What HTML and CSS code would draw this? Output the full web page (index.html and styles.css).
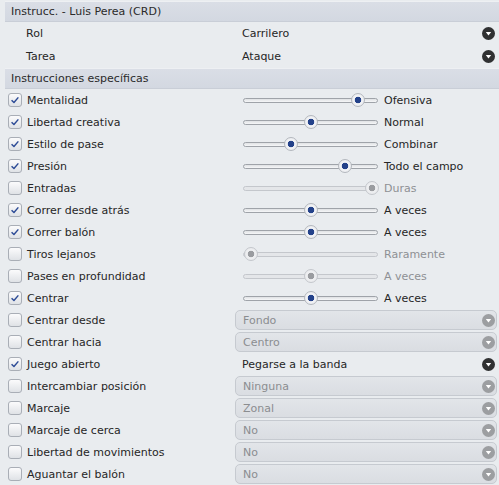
FILE: index.html
```html
<!DOCTYPE html>
<html>
<head>
<meta charset="utf-8">
<link rel="stylesheet" href="styles.css">
</head>
<body>
<div class="panel">
  <div class="head first">Instrucc. - Luis Perea (CRD)</div>
  <div class="row basic r1">
    <span class="lbl">Rol</span>
    <div class="ctl sel plain"><span class="val">Carrilero</span><svg class="arrow" viewBox="0 0 13 13"><circle cx="6.5" cy="6.5" r="6.5"/><path d="M3.8 5 H9.2 L6.5 8.6 Z"/></svg></div>
  </div>
  <div class="row basic r2">
    <span class="lbl">Tarea</span>
    <div class="ctl sel plain"><span class="val">Ataque</span><svg class="arrow" viewBox="0 0 13 13"><circle cx="6.5" cy="6.5" r="6.5"/><path d="M3.8 5 H9.2 L6.5 8.6 Z"/></svg></div>
  </div>
  <div class="head">Instrucciones específicas</div>

  <div class="row">
    <span class="chk on"><svg viewBox="0 0 14 14"><path d="M3 7.2 L5.8 10 L10.9 3.9"/></svg></span><span class="lbl">Mentalidad</span>
    <div class="ctl slider"><div class="track"><span class="thumb" style="left:107px"></span></div><span class="sv">Ofensiva</span></div>
  </div>
  <div class="row">
    <span class="chk on"><svg viewBox="0 0 14 14"><path d="M3 7.2 L5.8 10 L10.9 3.9"/></svg></span><span class="lbl">Libertad creativa</span>
    <div class="ctl slider"><div class="track"><span class="thumb" style="left:60px"></span></div><span class="sv">Normal</span></div>
  </div>
  <div class="row">
    <span class="chk on"><svg viewBox="0 0 14 14"><path d="M3 7.2 L5.8 10 L10.9 3.9"/></svg></span><span class="lbl">Estilo de pase</span>
    <div class="ctl slider"><div class="track"><span class="thumb" style="left:40px"></span></div><span class="sv">Combinar</span></div>
  </div>
  <div class="row">
    <span class="chk on"><svg viewBox="0 0 14 14"><path d="M3 7.2 L5.8 10 L10.9 3.9"/></svg></span><span class="lbl">Presión</span>
    <div class="ctl slider"><div class="track"><span class="thumb" style="left:94px"></span></div><span class="sv">Todo el campo</span></div>
  </div>
  <div class="row">
    <span class="chk"></span><span class="lbl">Entradas</span>
    <div class="ctl slider off"><div class="track"><span class="thumb" style="left:121px"></span></div><span class="sv">Duras</span></div>
  </div>
  <div class="row">
    <span class="chk on"><svg viewBox="0 0 14 14"><path d="M3 7.2 L5.8 10 L10.9 3.9"/></svg></span><span class="lbl">Correr desde atrás</span>
    <div class="ctl slider"><div class="track"><span class="thumb" style="left:60px"></span></div><span class="sv">A veces</span></div>
  </div>
  <div class="row">
    <span class="chk on"><svg viewBox="0 0 14 14"><path d="M3 7.2 L5.8 10 L10.9 3.9"/></svg></span><span class="lbl">Correr balón</span>
    <div class="ctl slider"><div class="track"><span class="thumb" style="left:60px"></span></div><span class="sv">A veces</span></div>
  </div>
  <div class="row">
    <span class="chk"></span><span class="lbl">Tiros lejanos</span>
    <div class="ctl slider off"><div class="track"><span class="thumb" style="left:0px"></span></div><span class="sv">Raramente</span></div>
  </div>
  <div class="row">
    <span class="chk"></span><span class="lbl">Pases en profundidad</span>
    <div class="ctl slider off"><div class="track"><span class="thumb" style="left:60px"></span></div><span class="sv">A veces</span></div>
  </div>
  <div class="row">
    <span class="chk on"><svg viewBox="0 0 14 14"><path d="M3 7.2 L5.8 10 L10.9 3.9"/></svg></span><span class="lbl">Centrar</span>
    <div class="ctl slider"><div class="track"><span class="thumb" style="left:60px"></span></div><span class="sv">A veces</span></div>
  </div>
  <div class="row">
    <span class="chk"></span><span class="lbl">Centrar desde</span>
    <div class="ctl sel box"><span class="val">Fondo</span><svg class="arrow" viewBox="0 0 13 13"><circle cx="6.5" cy="6.5" r="6.5"/><path d="M3.8 5 H9.2 L6.5 8.6 Z"/></svg></div>
  </div>
  <div class="row">
    <span class="chk"></span><span class="lbl">Centrar hacia</span>
    <div class="ctl sel box"><span class="val">Centro</span><svg class="arrow" viewBox="0 0 13 13"><circle cx="6.5" cy="6.5" r="6.5"/><path d="M3.8 5 H9.2 L6.5 8.6 Z"/></svg></div>
  </div>
  <div class="row">
    <span class="chk on"><svg viewBox="0 0 14 14"><path d="M3 7.2 L5.8 10 L10.9 3.9"/></svg></span><span class="lbl">Juego abierto</span>
    <div class="ctl sel plain"><span class="val">Pegarse a la banda</span><svg class="arrow" viewBox="0 0 13 13"><circle cx="6.5" cy="6.5" r="6.5"/><path d="M3.8 5 H9.2 L6.5 8.6 Z"/></svg></div>
  </div>
  <div class="row">
    <span class="chk"></span><span class="lbl">Intercambiar posición</span>
    <div class="ctl sel box"><span class="val">Ninguna</span><svg class="arrow" viewBox="0 0 13 13"><circle cx="6.5" cy="6.5" r="6.5"/><path d="M3.8 5 H9.2 L6.5 8.6 Z"/></svg></div>
  </div>
  <div class="row">
    <span class="chk"></span><span class="lbl">Marcaje</span>
    <div class="ctl sel box"><span class="val">Zonal</span><svg class="arrow" viewBox="0 0 13 13"><circle cx="6.5" cy="6.5" r="6.5"/><path d="M3.8 5 H9.2 L6.5 8.6 Z"/></svg></div>
  </div>
  <div class="row">
    <span class="chk"></span><span class="lbl">Marcaje de cerca</span>
    <div class="ctl sel box"><span class="val">No</span><svg class="arrow" viewBox="0 0 13 13"><circle cx="6.5" cy="6.5" r="6.5"/><path d="M3.8 5 H9.2 L6.5 8.6 Z"/></svg></div>
  </div>
  <div class="row">
    <span class="chk"></span><span class="lbl">Libertad de movimientos</span>
    <div class="ctl sel box"><span class="val">No</span><svg class="arrow" viewBox="0 0 13 13"><circle cx="6.5" cy="6.5" r="6.5"/><path d="M3.8 5 H9.2 L6.5 8.6 Z"/></svg></div>
  </div>
  <div class="row">
    <span class="chk"></span><span class="lbl">Aguantar el balón</span>
    <div class="ctl sel box"><span class="val">No</span><svg class="arrow" viewBox="0 0 13 13"><circle cx="6.5" cy="6.5" r="6.5"/><path d="M3.8 5 H9.2 L6.5 8.6 Z"/></svg></div>
  </div>
</div>
</body>
</html>
```

FILE: styles.css
```css
html, body {
  margin: 0;
  padding: 0;
  background: #e9ecef;
  font-family: "DejaVu Sans", Verdana, sans-serif;
  font-size: 11px;
  color: #262626;
  overflow: hidden;
}

.panel {
  padding-left: 5px;
  width: 494px;
}

.head {
  height: 21px;
  box-sizing: border-box;
  padding-left: 6px;
  display: flex;
  align-items: center;
  background: linear-gradient(#dadee6, #d3d8e1);
  border-top: 1px solid #eef0f3;
  border-bottom: 1px solid #c9ced7;
  color: #2a2a2a;
}

.head.first {
  margin-top: 1px;
}

.row {
  height: 22px;
  display: grid;
  grid-template-columns: 230px 1fr;
  align-items: center;
  position: relative;
}

.row.r1 { height: 23px; }
.row.r2 { height: 23px; }

.row:not(.basic) {
  grid-template-columns: 22px 208px 1fr;
}

.basic .lbl {
  padding-left: 21px;
}

.chk {
  width: 14px;
  height: 14px;
  box-sizing: border-box;
  margin-left: 3px;
  border: 1px solid #a9aeb6;
  border-radius: 3px;
  background: linear-gradient(#fbfbfc, #dfe2e6);
  display: flex;
}

.chk svg {
  width: 12px;
  height: 12px;
}

.chk svg path {
  fill: none;
  stroke: #2c4b96;
  stroke-width: 1.7;
  stroke-linejoin: round;
}

.lbl {
  white-space: nowrap;
}

.ctl {
  display: flex;
  align-items: center;
  margin-right: 2px;
}

.sel {
  justify-content: space-between;
  padding-left: 7px;
}

.sel .arrow {
  width: 13px;
  height: 13px;
  margin-right: 2px;
}

.sel.plain .arrow circle { fill: #303132; }
.sel .arrow path { fill: #ffffff; }

.sel.box {
  height: 20px;
  box-sizing: border-box;
  padding-left: 7px;
  border: 1px solid #c6cad0;
  border-radius: 5px;
  background: linear-gradient(#e2e5e9, #dadde2);
  color: #8b8d90;
}

.sel.box .arrow { margin-right: 1px; }
.sel.box .arrow circle { fill: #9c9ea1; }

.slider {
  padding-left: 8px;
}

.track {
  position: relative;
  width: 135px;
  height: 5px;
  box-sizing: border-box;
  border: 1px solid #9fa3a9;
  border-radius: 3px;
  background: linear-gradient(#dfe1e4, #f6f7f8);
}

.thumb {
  position: absolute;
  top: -6px;
  width: 14px;
  height: 14px;
  box-sizing: border-box;
  border: 1px solid #b4b8be;
  border-radius: 50%;
  background: radial-gradient(circle, #24428a 0 3px, #f4f5f7 3.6px, #e2e4e8 100%);
}

.sv {
  margin-left: 6px;
  white-space: nowrap;
}

.slider.off .track {
  border-color: #c4c7cc;
  background: #e4e6e9;
}

.slider.off .thumb {
  border-color: #c4c7cc;
  background: radial-gradient(circle, #9a9ca0 0 3px, #eff0f2 3.6px, #e3e5e8 100%);
}

.slider.off .sv {
  color: #8e9094;
}
```
